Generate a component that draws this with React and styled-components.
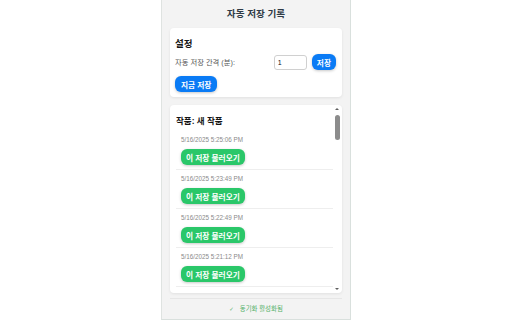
import React from "react";
import styled, { createGlobalStyle } from "styled-components";

const Global = createGlobalStyle`
  html, body { margin: 0; padding: 0; background: #ffffff; }
  body { font-family: "Liberation Sans", "Noto Sans CJK KR", sans-serif; }
  * { box-sizing: border-box; }
`;

const KR = `"Liberation Sans", "Noto Sans CJK KR", sans-serif`;

const Panel = styled.div`
  position: relative;
  width: 190px;
  height: 320px;
  margin: 0 auto;
  background: #f3f3f3;
  border-left: 1px solid #dfe3e1;
  border-right: 1px solid #d9e0dd;
  border-bottom: 1px solid #d9e0dd;
  padding: 0 8px;
  display: flex;
  flex-direction: column;
  overflow: hidden;
  font-family: ${KR};
  &::before {
    content: "";
    position: absolute;
    left: -1px;
    top: 0;
    width: 1px;
    height: 45px;
    background: #8497e6;
  }
`;

const Title = styled.h1`
  margin: 0;
  height: 28px;
  flex: none;
  line-height: 28px;
  text-align: center;
  font-size: 9.6px;
  font-weight: 600;
  color: #2f3a45;
`;

const Card = styled.div`
  flex: none;
  background: #ffffff;
  border-radius: 4px;
  box-shadow: 0 1px 3px rgba(0, 0, 0, 0.08);
  padding: 6px 6px 5px 5px;
`;

const HistoryCard = styled.div`
  flex: none;
  margin-top: 8px;
  height: 188px;
  background: #ffffff;
  border-radius: 4px;
  box-shadow: 0 1px 3px rgba(0, 0, 0, 0.08);
  padding: 0 1px 0 6px;
  display: flex;
  overflow: hidden;
`;

const ScrollArea = styled.div`
  flex: 1;
  min-width: 0;
  padding-top: 6px;
  overflow: hidden;
`;

const ScrollBar = styled.div`
  width: 8px;
  flex: none;
  display: flex;
  flex-direction: column;
  align-items: center;
`;

const Arrow = styled.div`
  height: 8px;
  width: 8px;
  display: flex;
  align-items: center;
  justify-content: center;
  &::after {
    content: "";
    width: 0;
    height: 0;
    border-left: 2.5px solid transparent;
    border-right: 2.5px solid transparent;
    ${(p) =>
      p.$down
        ? "border-top: 2.5px solid #5f5f5f;"
        : "border-bottom: 2.5px solid #5f5f5f;"}
  }
`;

const Thumb = styled.div`
  margin-top: 2px;
  width: 5px;
  height: 25px;
  border-radius: 3px;
  background: #8c8c8c;
`;

const Spacer = styled.div`
  flex: 1;
`;

const CardHeading = styled.h2`
  margin: 4px 0 4px 0;
  line-height: 12px;
  font-size: ${(p) => p.$size || 8.5}px;
  font-weight: 700;
  color: #151515;
`;

const Row = styled.div`
  display: flex;
  align-items: center;
  height: 16px;
`;

const Label = styled.span`
  flex: 1;
  font-size: 7.3px;
  color: #555;
`;

const NumInput = styled.input`
  width: 33px;
  height: 15px;
  border: 1px solid #d0d0d0;
  border-radius: 3px;
  font-family: ${KR};
  font-size: 7px;
  padding: 0 0 0 3px;
  color: #111;
  margin-right: 5px;
  outline: none;
`;

const Button = styled.button`
  border: none;
  border-radius: 6px;
  height: 16px;
  padding: 0 ${(p) => p.$px || 5}px;
  font-family: ${KR};
  font-size: 7.7px;
  font-weight: 700;
  color: #ffffff;
  background: ${(p) => (p.$green ? "#2ac769" : "#0a7bf5")};
  box-shadow: 0 1px 3px rgba(0, 0, 0, 0.22);
  cursor: pointer;
  white-space: nowrap;
`;

const SaveNowWrap = styled.div`
  margin-top: 6px;
  display: flex;
`;

const Item = styled.div`
  padding: 4px 5px;
  border-bottom: 1px solid #eeeeee;
  display: flex;
  flex-direction: column;
  align-items: flex-start;
`;

const DateText = styled.div`
  font-family: "Liberation Sans", sans-serif;
  font-size: 6.3px;
  line-height: 10px;
  color: #8a8a8a;
  margin-bottom: 4px;
`;

const Footer = styled.div`
  flex: none;
  margin-top: 5px;
  border-top: 1px solid #e6e6e6;
  height: 20px;
  display: flex;
  justify-content: center;
  align-items: center;
  font-size: 6.4px;
  line-height: 14px;
  color: #55b26b;
`;

const FooterRow = styled.div`
  display: flex;
  align-items: center;
  gap: 6px;
  height: 14px;
`;

const Check = styled.span`
  font-family: "DejaVu Sans", sans-serif;
  font-size: 5.5px;
  line-height: 8px;
`;

const history = [
  "5/16/2025 5:25:06 PM",
  "5/16/2025 5:23:49 PM",
  "5/16/2025 5:22:49 PM",
  "5/16/2025 5:21:12 PM",
];

export default function App() {
  return (
    <>
      <Global />
      <Panel>
        <Title>자동 저장 기록</Title>
        <Card>
          <CardHeading $size={9.5}>설정</CardHeading>
          <Row>
            <Label>자동 저장 간격 (분):</Label>
            <NumInput type="number" defaultValue={1} />
            <Button>저장</Button>
          </Row>
          <SaveNowWrap>
            <Button $px={6}>지금 저장</Button>
          </SaveNowWrap>
        </Card>
        <HistoryCard>
          <ScrollArea>
            <CardHeading>작품: 새 작품</CardHeading>
            {history.map((d) => (
              <Item key={d}>
                <DateText>{d}</DateText>
                <Button $green>이 저장 불러오기</Button>
              </Item>
            ))}
          </ScrollArea>
          <ScrollBar>
            <Arrow />
            <Thumb />
            <Spacer />
            <Arrow $down />
          </ScrollBar>
        </HistoryCard>
        <Footer>
          <FooterRow>
            <Check>✓</Check>
            <span>동기화 활성화됨</span>
          </FooterRow>
        </Footer>
      </Panel>
    </>
  );
}
